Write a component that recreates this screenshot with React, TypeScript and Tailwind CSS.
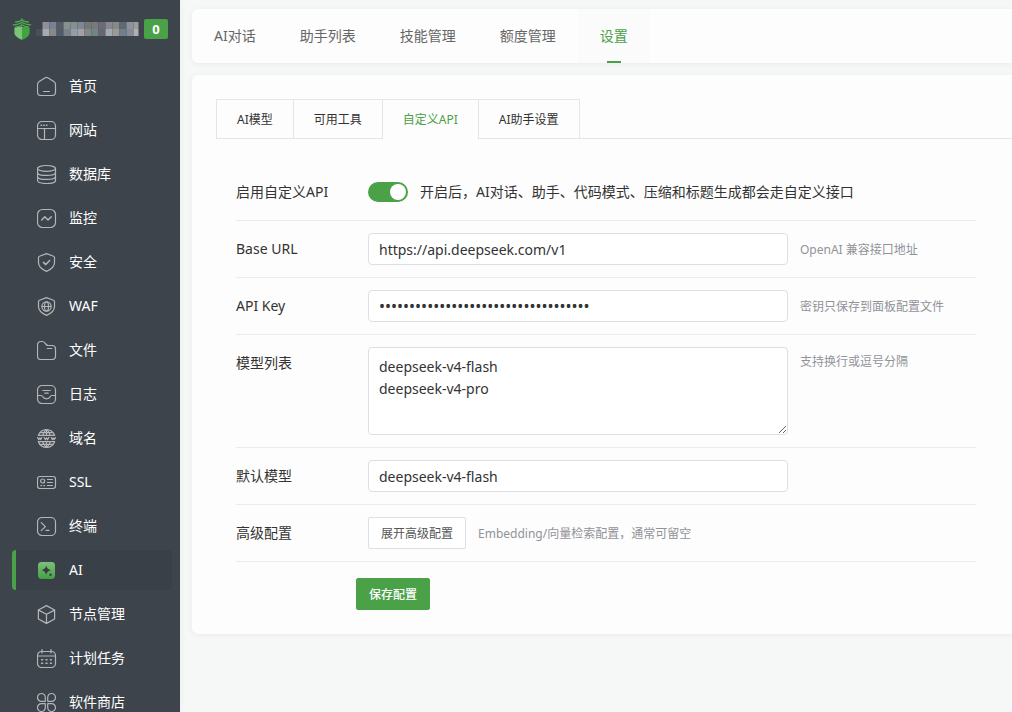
import { useState, type ReactNode } from "react";

type NavItem = { name: string; icon: ReactNode };

const shieldPath = "M9.5 .6 L16.6 3.2 Q17.5 3.5 17.5 4.4 V9.6 C17.5 14 14 16.6 9.5 18.4 C5 16.6 1.5 14 1.5 9.6 V4.4 Q1.5 3.5 2.4 3.2 Z";

const navItems: NavItem[] = [
  {
    name: "首页",
    icon: (
      <>
        <path d="M8.2 .8 Q9.5 .1 10.8 .8 L16.8 4.6 Q18.5 5.7 18.5 7.6 V15 Q18.5 18.5 15 18.5 H4 Q.5 18.5 .5 15 V7.6 Q.5 5.7 2.2 4.6 Z" />
        <path d="M6.5 14.5 H12.5" />
      </>
    ),
  },
  {
    name: "网站",
    icon: (
      <>
        <rect x=".5" y=".5" width="18" height="18" rx="4.5" />
        <path d="M.5 7.5 H18.5 M7.5 7.5 V18.5" />
        <path d="M4 4.3 H4.6 M6.7 4.3 H7.3 M9.4 4.3 H10" strokeWidth="1.4" />
      </>
    ),
  },
  {
    name: "数据库",
    icon: (
      <>
        <ellipse cx="9.5" cy="3.4" rx="9" ry="2.9" />
        <path d="M.5 3.4 V15.4 C.5 19.5 18.5 19.5 18.5 15.4 V3.4" />
        <path d="M.5 7.5 C.5 11.4 18.5 11.4 18.5 7.5 M.5 11.5 C.5 15.4 18.5 15.4 18.5 11.5" />
      </>
    ),
  },
  {
    name: "监控",
    icon: (
      <>
        <rect x=".5" y=".5" width="18" height="18" rx="5" />
        <path d="M4.7 11 L7.8 7.8 L11 11 L14.3 7.8" strokeWidth="1.5" />
      </>
    ),
  },
  {
    name: "安全",
    icon: (
      <>
        <path d={shieldPath} />
        <path d="M6.4 9.4 L8.8 11.6 L12.6 7.6" strokeWidth="1.5" />
      </>
    ),
  },
  {
    name: "WAF",
    icon: (
      <>
        <path d={shieldPath} />
        <circle cx="9.5" cy="9.5" r="4.6" />
        <ellipse cx="9.5" cy="9.5" rx="2" ry="4.6" />
        <path d="M5 9.5 H14" />
      </>
    ),
  },
  {
    name: "文件",
    icon: (
      <>
        <path d="M.5 4.3 Q.5 .5 4 .5 H5.4 Q6.8 .5 7.8 1.8 L9.2 3.5 Q10 4.5 11.2 4.5 H15 Q18.5 4.5 18.5 8 V15 Q18.5 18.5 15 18.5 H4 Q.5 18.5 .5 15 Z" />
        <path d="M10.3 7.5 H14.8" />
      </>
    ),
  },
  {
    name: "日志",
    icon: (
      <>
        <rect x=".5" y=".5" width="18" height="18" rx="4.5" />
        <path d="M.5 10.5 H4 Q5.3 10.5 6 12 Q6.8 13.8 9.5 13.8 Q12.2 13.8 13 12 Q13.7 10.5 15 10.5 H18.5" />
        <path d="M5.8 5.5 H13.2 M7.8 8.2 H11.2" />
      </>
    ),
  },
  {
    name: "域名",
    icon: (
      <>
        <path d="M1.3 6.3 C2.8 2.8 5.8 .6 9.5 .6 C13.2 .6 16.2 2.8 17.7 6.3 Z M1.3 12.7 C2.8 16.2 5.8 18.4 9.5 18.4 C13.2 18.4 16.2 16.2 17.7 12.7 Z" />
        <path d="M5.7 6.3 Q6.6 2.4 9.5 .6 Q12.4 2.4 13.3 6.3 M5.7 12.7 Q6.6 16.6 9.5 18.4 Q12.4 16.6 13.3 12.7 M9.5 .6 V6.3 M9.5 12.7 V18.4 M3.2 3.6 H15.8 M3.2 15.4 H15.8" />
        <path d="M.6 8.6 L1.8 10.6 L2.8 8.8 L3.8 10.6 L4.8 8.6 M7.2 8.4 L8.4 10.8 L9.5 8.8 L10.6 10.8 L11.8 8.4 M14.2 8.6 L15.2 10.6 L16.2 8.8 L17.2 10.6 L18.4 8.6" />
      </>
    ),
  },
  {
    name: "SSL",
    icon: (
      <>
        <rect x=".5" y="3.5" width="18" height="12" rx="2.4" />
        <circle cx="5.6" cy="8" r="2" />
        <path d="M3.8 12.6 H4.6 M6.8 12.6 H7.6 M10.4 6.5 H15.4 M10.4 9.5 H15.4 M10.4 12.5 H15.4" />
      </>
    ),
  },
  {
    name: "终端",
    icon: (
      <>
        <rect x=".5" y=".5" width="18" height="18" rx="4.5" />
        <path d="M4.2 5.6 L8.4 9.6 L4.2 13.6 M9 13.4 H12" />
      </>
    ),
  },
  {
    name: "AI",
    icon: (
      <>
        <defs>
          <linearGradient id="aiFill" x1="0" y1="0" x2="0" y2="1">
            <stop offset="0" stopColor="#7cc07c" />
            <stop offset="1" stopColor="#45a043" />
          </linearGradient>
        </defs>
        <rect x="1" y="1" width="17" height="17" rx="3.4" fill="url(#aiFill)" stroke="none" />
        <path d="M9.2 4.6 Q9.9 8.4 14 9.2 Q9.9 10 9.2 14 Q8.5 10 4.4 9.2 Q8.5 8.4 9.2 4.6 Z" fill="#363d45" stroke="none" />
        <circle cx="13.5" cy="13.8" r="1.2" fill="#363d45" stroke="none" />
      </>
    ),
  },
  {
    name: "节点管理",
    icon: (
      <>
        <path d="M9.5 .6 L17.6 5 V14 L9.5 18.4 L1.4 14 V5 Z" />
        <path d="M1.4 5.1 L9.5 9.3 L17.6 5.1 M9.5 9.3 V18.4" />
      </>
    ),
  },
  {
    name: "计划任务",
    icon: (
      <>
        <rect x=".5" y="2.5" width="18" height="16" rx="4" />
        <path d="M.5 7 H18.5 M5 .6 V4 M14 .6 V4" />
        <path d="M4.6 10.8 H5.6 M9 10.8 H10 M13.4 10.8 H14.4 M4.6 14.2 H5.6 M9 14.2 H10 M13.4 14.2 H14.4" strokeWidth="1.5" />
      </>
    ),
  },
  {
    name: "软件商店",
    icon: (
      <path d="M8.3 8.3 H4.5 A3.9 3.9 0 1 1 8.3 4.5 Z M10.7 8.3 V4.5 A3.9 3.9 0 1 1 14.5 8.3 Z M8.3 10.7 V14.5 A3.9 3.9 0 1 1 4.5 10.7 Z M10.7 10.7 H14.5 A3.9 3.9 0 1 1 10.7 14.5 Z" />
    ),
  },
];

const maskTop = ["", "#8f8e9c", "#788294", "#565c63", "#85908f", "#838f90", "#7f8790", "#747878", "#767a79", "#6a6b78", "#888791", "#858a86", "#5d6974", "#8f929c", "#9c9ba0"];
const maskBottom = ["#46505f", "#a8aaae", "#8b8888", "#525b69", "#7c8288", "#909dab", "#a3a1a8", "#868685", "#70858a", "#6b6572", "#a1a9b3", "#9a9a97", "#717f8b", "#888a96", "#b0b0ae"];

function Logo() {
  return (
    <svg viewBox="0 0 20 22" className="h-[22px] w-5 shrink-0" aria-hidden="true">
      <path d="M10 8.6 L2.4 9.6 V14.5 C2.4 18 6 20.2 10 21.8 Z" fill="#7cc47a" />
      <path d="M10 8.6 L17.6 9.6 V14.5 C17.6 18 14 20.2 10 21.8 Z" fill="#41a340" />
      <path d="M10 .2 V2.4 M3 4.2 Q8 3.8 10 2 Q12 3.8 17 4.2 M.8 6.8 Q7.4 6.4 10 4.2 Q12.6 6.4 19.2 6.8 M3 9.2 Q8 8.6 10 6.8 Q12 8.6 17 9.2" fill="none" stroke="#4fae4d" strokeWidth="1.2" />
    </svg>
  );
}

function Sidebar() {
  return (
    <aside className="flex w-[180px] shrink-0 flex-col overflow-hidden bg-[#3d444b] shadow-[1px_0_6px_rgba(0,0,0,0.04)]">
      <div className="flex h-[58px] shrink-0 items-center pl-3">
        <Logo />
        <svg viewBox="0 0 103 14" className="ml-1 h-3.5 w-[103px] shrink-0" aria-hidden="true">
          {maskTop.map((c, i) => c && <rect key={i} x={i * 7 - 0.5} y="0" width={i === 14 ? 5 : 7} height="7" fill={c} />)}
          {maskBottom.map((c, i) => <rect key={i} x={i * 7 - 0.5} y="7" width={i === 14 ? 5 : 7} height="7" fill={c} />)}
        </svg>
        <span className="ml-[5px] flex h-5 w-6 items-center justify-center rounded-xs bg-[#4aa147] text-[13px] font-bold text-white">0</span>
      </div>
      <nav className="flex flex-col gap-1 pt-2 pr-2 pl-3">
        {navItems.map((item) => (
          <a
            key={item.name}
            href="#"
            className={
              item.name === "AI"
                ? "flex h-10 shrink-0 items-center gap-3 rounded border-l-4 border-[#4aa147] bg-[#394047] pl-[21px] text-sm text-white"
                : "flex h-10 shrink-0 items-center gap-3 rounded border-l-4 border-transparent pl-[21px] text-sm text-white"
            }
          >
            <svg viewBox="0 -1 20 20" className="size-5 shrink-0" fill="none" stroke="#b4b6b8" strokeWidth="1.2" strokeLinecap="round" strokeLinejoin="round" aria-hidden="true">
              {item.icon}
            </svg>
            <span>{item.name}</span>
          </a>
        ))}
      </nav>
    </aside>
  );
}

function Row({ label, htmlFor, children }: { label: string; htmlFor: string; children: ReactNode }) {
  return (
    <div className="flex items-start border-b border-[#ebecf2] py-3">
      <label htmlFor={htmlFor} className="w-[132px] shrink-0 leading-8">
        {label}
      </label>
      <div className="flex min-w-0 flex-1 items-start gap-3">{children}</div>
    </div>
  );
}

const fieldClass = "w-[420px] rounded border border-[#dcdfe6] bg-white px-2.5 text-[#333] outline-none focus:border-[#4aa147]";
const hintClass = "pt-2 text-xs leading-[18px] text-[#909399]";

export default function App() {
  const [page, setPage] = useState("设置");
  const [tab, setTab] = useState("自定义API");
  return (
    <div className="flex h-screen overflow-hidden bg-[#f6f8f8] font-['Noto_Sans','Noto_Sans_CJK_SC',sans-serif] text-sm text-[#333]">
      <Sidebar />
      <main className="flex min-w-0 flex-1 flex-col gap-3 overflow-hidden pt-[9px] pl-3">
        <nav className="flex h-[54px] shrink-0 rounded-l-md bg-[#fdfdfd] shadow-[0_1px_6px_rgba(0,0,0,0.06)]">
          {["AI对话", "助手列表", "技能管理", "额度管理", "设置"].map((name) => (
            <button
              key={name}
              type="button"
              onClick={() => setPage(name)}
              className={
                name === page
                  ? "flex flex-col items-center bg-[#fbfbfb] px-[22px] text-[#4aa147]"
                  : "flex flex-col items-center px-[22px] text-[#666]"
              }
            >
              <span className="flex flex-1 items-center pt-0.5">{name}</span>
              <span className={name === page ? "h-0.5 w-3.5 bg-[#4aa147]" : "h-0.5 w-3.5"} />
            </button>
          ))}
        </nav>

        <section className="shrink-0 rounded-l-md bg-[#fdfdfd] pt-6 pb-6 pl-6 shadow-[0_1px_6px_rgba(0,0,0,0.06)]">
          <div className="flex h-10 text-xs" role="tablist">
            {["AI模型", "可用工具", "自定义API", "AI助手设置"].map((name) => (
              <button
                key={name}
                type="button"
                role="tab"
                aria-selected={name === tab}
                onClick={() => setTab(name)}
                className={
                  name === tab
                    ? "border-t border-l border-[#e3e4ec] px-5 pt-px text-[#4aa147]"
                    : "border-t border-b border-l border-[#e3e4ec] px-5 pt-0.5 text-[#333]"
                }
              >
                {name}
              </button>
            ))}
            <div className="flex-1 border-b border-l border-[#e3e4ec]" />
          </div>

          <form className="mt-[25px] ml-5 max-w-[740px]" onSubmit={(e) => e.preventDefault()}>
            <Row label="启用自定义API" htmlFor="enabled">
              <div className="flex h-8 items-center gap-3">
                <input
                  id="enabled"
                  type="checkbox"
                  role="switch"
                  defaultChecked
                  className="flex h-5 w-10 shrink-0 appearance-none items-center rounded-full bg-[#c8ccd2] px-0.5 before:size-4 before:rounded-full before:bg-white checked:justify-end checked:bg-[#4aa147]"
                />
                <span>开启后，AI对话、助手、代码模式、压缩和标题生成都会走自定义接口</span>
              </div>
            </Row>
            <Row label="Base URL" htmlFor="base-url">
              <input id="base-url" type="text" defaultValue="https://api.deepseek.com/v1" className={`${fieldClass} h-8 text-sm`} />
              <span className={hintClass}>OpenAI 兼容接口地址</span>
            </Row>
            <Row label="API Key" htmlFor="api-key">
              <input id="api-key" type="password" defaultValue={"0".repeat(35)} className={`${fieldClass} h-8 text-base`} />
              <span className={hintClass}>密钥只保存到面板配置文件</span>
            </Row>
            <Row label="模型列表" htmlFor="models">
              <textarea id="models" defaultValue={"deepseek-v4-flash\ndeepseek-v4-pro"} className={`${fieldClass} block h-[88px] resize py-2 text-sm leading-[22px]`} />
              <span className="pt-1.5 text-xs leading-[18px] text-[#909399]">支持换行或逗号分隔</span>
            </Row>
            <Row label="默认模型" htmlFor="default-model">
              <input id="default-model" type="text" defaultValue="deepseek-v4-flash" className={`${fieldClass} h-8 text-sm`} />
            </Row>
            <Row label="高级配置" htmlFor="advanced">
              <button id="advanced" type="button" className="h-8 rounded-xs border border-[#dcdfe6] bg-white px-3 pt-0.5 text-xs text-[#555]">
                展开高级配置
              </button>
              <span className={hintClass}>Embedding/向量检索配置，通常可留空</span>
            </Row>
            <button type="submit" className="mt-4 ml-[120px] block h-8 rounded-xs border border-[#4aa147] bg-[#4aa147] px-3 pt-0.5 text-xs font-medium text-white">
              保存配置
            </button>
          </form>
        </section>
      </main>
    </div>
  );
}
